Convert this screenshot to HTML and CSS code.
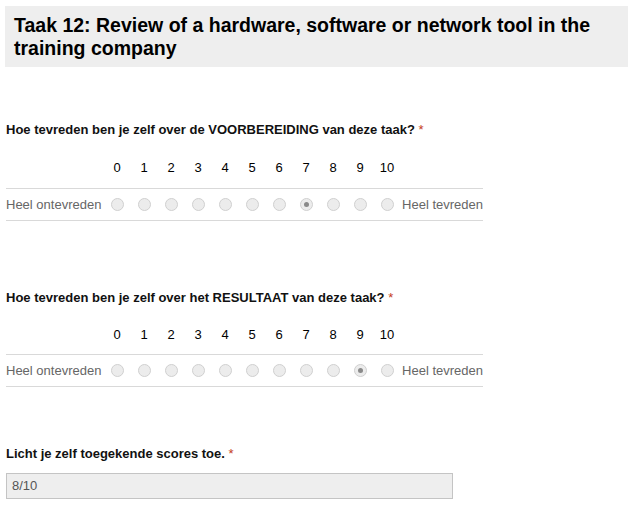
FILE: index.html
```html
<!DOCTYPE html>
<html>
<head>
<meta charset="utf-8">
<link rel="stylesheet" href="styles.css">
</head>
<body>
<div class="header">
  <h1 class="title">Taak 12: Review of a hardware, software or network tool in the training company</h1>
</div>

<div class="question q1">
  <div class="qlabel">Hoe tevreden ben je zelf over de VOORBEREIDING van deze taak? <span class="req">*</span></div>
  <div class="scale">
    <div class="nums">
      <span class="side"></span>
      <span>0</span><span>1</span><span>2</span><span>3</span><span>4</span><span>5</span><span>6</span><span>7</span><span>8</span><span>9</span><span>10</span>
      <span class="side"></span>
    </div>
    <div class="radios">
      <span class="side left">Heel ontevreden</span>
      <span><i class="radio"></i></span><span><i class="radio"></i></span><span><i class="radio"></i></span><span><i class="radio"></i></span><span><i class="radio"></i></span><span><i class="radio"></i></span><span><i class="radio"></i></span><span><i class="radio checked"></i></span><span><i class="radio"></i></span><span><i class="radio"></i></span><span><i class="radio"></i></span>
      <span class="side right">Heel tevreden</span>
    </div>
  </div>
</div>

<div class="question q2">
  <div class="qlabel">Hoe tevreden ben je zelf over het RESULTAAT van deze taak? <span class="req">*</span></div>
  <div class="scale">
    <div class="nums">
      <span class="side"></span>
      <span>0</span><span>1</span><span>2</span><span>3</span><span>4</span><span>5</span><span>6</span><span>7</span><span>8</span><span>9</span><span>10</span>
      <span class="side"></span>
    </div>
    <div class="radios">
      <span class="side left">Heel ontevreden</span>
      <span><i class="radio"></i></span><span><i class="radio"></i></span><span><i class="radio"></i></span><span><i class="radio"></i></span><span><i class="radio"></i></span><span><i class="radio"></i></span><span><i class="radio"></i></span><span><i class="radio"></i></span><span><i class="radio"></i></span><span><i class="radio checked"></i></span><span><i class="radio"></i></span>
      <span class="side right">Heel tevreden</span>
    </div>
  </div>
</div>

<div class="question q3">
  <div class="qlabel">Licht je zelf toegekende scores toe. <span class="req">*</span></div>
  <div class="textbox">8/10</div>
</div>
</body>
</html>
```

FILE: styles.css
```css
html, body {
  margin: 0;
  padding: 0;
  background: #fff;
}
body {
  font-family: Arial, "Liberation Sans", sans-serif;
  color: #000;
  padding: 6px 8px 0 5px;
}
.header {
  background: #eeeeee;
  padding: 8px 9px 7px 9px;
}
.title {
  margin: 0;
  font-size: 19.5px;
  line-height: 23px;
  font-weight: bold;
  color: #000;
}
.question {
  padding-left: 1px;
}
.q1 {
  margin-top: 55px;
}
.q2 {
  margin-top: 69px;
}
.q3 {
  margin-top: 59px;
}
.qlabel {
  font-size: 13px;
  font-weight: bold;
  line-height: 16px;
  color: #111;
}
.req {
  color: #c43b1d;
  font-weight: normal;
}
.scale {
  width: 477px;
  margin-top: 22px;
}
.q2 .scale {
  margin-top: 21px;
}
.nums, .radios {
  display: grid;
  grid-template-columns: 97.5px repeat(11, 27px) 1fr;
  align-items: center;
  font-size: 13px;
}
.nums {
  line-height: 16px;
  padding-bottom: 12px;
  color: #000;
}
.q2 .nums {
  padding-bottom: 11px;
}
.nums span, .radios span {
  text-align: center;
}
.radios {
  height: 31px;
  border-top: 1px solid #d9d9d9;
  border-bottom: 1px solid #d9d9d9;
  color: #666;
}
.radios span {
  display: flex;
  justify-content: center;
  align-items: center;
}
.radios .side.left {
  justify-content: flex-start;
}
.radios .side.right {
  justify-content: flex-end;
}
.radio {
  display: block;
  width: 11px;
  height: 11px;
  border-radius: 50%;
  background: #ececec;
  border: 1px solid #d0d0d0;
  box-sizing: content-box;
  position: relative;
}
.radio.checked::after {
  content: "";
  position: absolute;
  left: 3px;
  top: 3px;
  width: 5px;
  height: 5px;
  border-radius: 50%;
  background: #8a8a8a;
}
.textbox {
  margin-top: 11px;
  width: 440px;
  height: 24px;
  background: #eeeeee;
  border: 1px solid #c4c4c4;
  font-size: 13px;
  line-height: 24px;
  padding-left: 5px;
  color: #555;
}
```
